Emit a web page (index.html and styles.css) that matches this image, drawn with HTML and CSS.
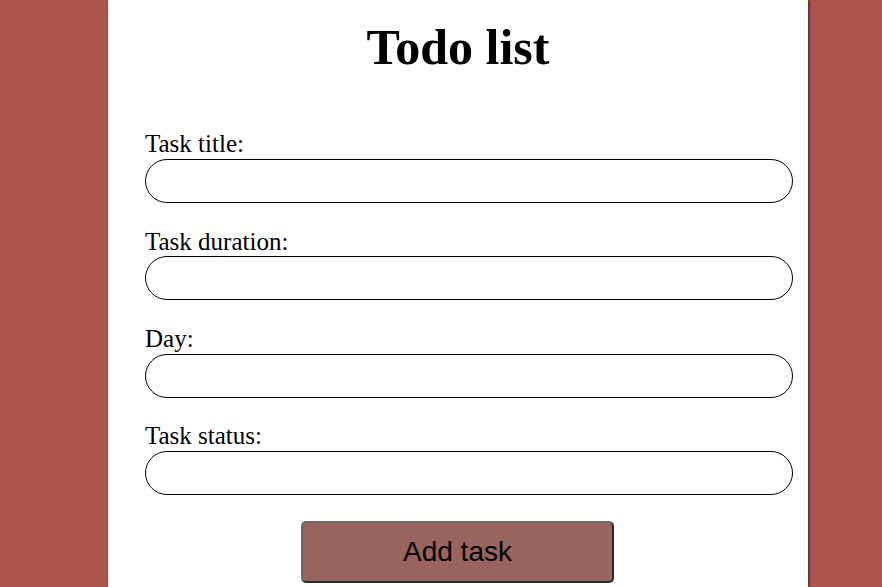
FILE: index.html
```html
<!DOCTYPE html>
<html>
<head>
<meta charset="utf-8">
<link rel="stylesheet" href="styles.css">
</head>
<body>
<div class="container">
  <h1 class="title">Todo list</h1>
  <form class="form">
    <div class="field">
      <label class="label" for="t">Task title:</label>
      <input class="input" id="t" type="text">
    </div>
    <div class="field">
      <label class="label" for="d">Task duration:</label>
      <input class="input" id="d" type="text">
    </div>
    <div class="field">
      <label class="label" for="y">Day:</label>
      <input class="input" id="y" type="text">
    </div>
    <div class="field">
      <label class="label" for="s">Task status:</label>
      <input class="input" id="s" type="text">
    </div>
    <div class="actions">
      <button class="btn" type="button">Add task</button>
    </div>
  </form>
</div>
</body>
</html>
```
FILE: styles.css
```css
html, body {
  margin: 0;
  padding: 0;
  background: #b0554e;
  height: 100%;
  overflow: hidden;
}
.container {
  width: 700px;
  margin-left: 108px;
  min-height: 100%;
  background: #ffffff;
  box-shadow: 1px 0 3px rgba(0,0,0,0.7);
  font-family: "Liberation Serif", "Times New Roman", serif;
  padding-top: 18.5px;
  box-sizing: border-box;
}
.title {
  margin: 0;
  font-size: 50px;
  font-weight: bold;
  line-height: 57.5px;
  text-align: center;
}
.form {
  margin: 54.3px 0 0 0;
  padding: 0 15px 0 37px;
  display: flex;
  flex-direction: column;
  gap: 24.67px;
}
.field {
  display: flex;
  flex-direction: column;
}
.label {
  font-size: 25px;
  line-height: 28.67px;
  color: #000;
}
.input {
  box-sizing: border-box;
  width: 648px;
  height: 44px;
  margin: 0;
  border: 1px solid #000;
  border-radius: 22px;
  background: #fff;
  padding: 0 20px;
  font-size: 16px;
  outline: none;
}
.actions {
  display: flex;
  justify-content: center;
  margin-top: 1.33px;
  margin-left: -38px;
  margin-right: -15px;
}
.btn {
  width: 313px;
  height: 62px;
  box-sizing: border-box;
  background: #99645f;
  border: 2px solid #3a3a3a;
  border-color: #6a6a6a #2a2a2a #2a2a2a #6a6a6a;
  border-radius: 5px;
  font-family: "Liberation Sans", Arial, sans-serif;
  font-size: 28px;
  color: #000;
  padding: 0;
}
```
